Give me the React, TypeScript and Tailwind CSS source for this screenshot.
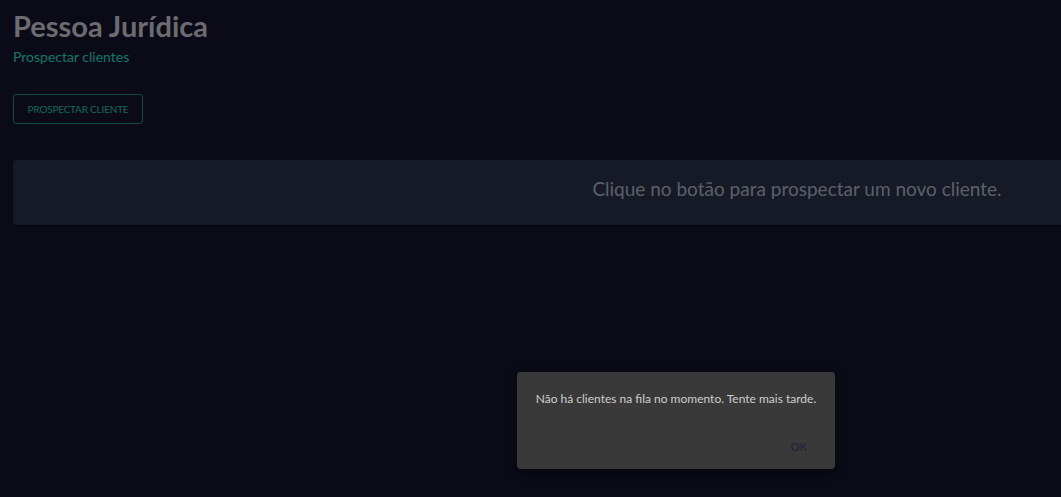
export default function App() {
  return (
    <div className="relative min-h-[497px] w-full overflow-hidden bg-[#0b0b17] font-['Lato',sans-serif]">
      <div className="px-[13px] pt-[8px]">
        <h1 className="text-[29px] font-bold leading-[36px] text-[#6b6b70]">Pessoa Jurídica</h1>
        <p className="mt-[4px] text-[14px] leading-[18px] text-[#0f7a68]">Prospectar clientes</p>
        <button className="mt-[28px] h-[30px] w-[130px] rounded-[3px] border border-[#0d4a40] text-[10px] uppercase tracking-[-0.2px] text-[#0f6b5a]">
          Prospectar cliente
        </button>
        <div className="mt-[36px] flex h-[65px] w-[1568px] items-center justify-center rounded-[3px] bg-[#161a26] pb-[6px] shadow-[0_1px_1px_rgba(0,0,0,0.6)]">
          <span className="text-[19px] text-[#5d6068]">Clique no botão para prospectar um novo cliente.</span>
        </div>
      </div>

      {/* Snackbar */}
      <div className="absolute left-[517px] top-[372px] flex h-[97px] w-[318px] flex-col rounded-[4px] bg-[#393939] shadow-[0_3px_8px_rgba(0,0,0,0.5)]">
        <p className="pt-[19px] text-center text-[12px] leading-[16px] text-[#cfcfcf]">
          Não há clientes na fila no momento. Tente mais tarde.
        </p>
        <div className="mt-auto flex justify-end pb-[14px] pr-[28px]">
          <span className="text-[11px] font-medium text-[#22223a]">OK</span>
        </div>
      </div>
    </div>
  );
}
